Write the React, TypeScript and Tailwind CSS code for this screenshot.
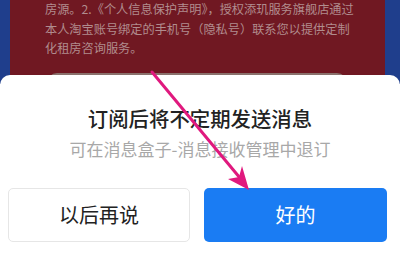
import React from 'react';

export default function App() {
  return (
    <div className="relative w-[400px] h-[263px] overflow-hidden bg-white font-['Noto_Sans_CJK_SC','Noto_Sans',sans-serif]">
      {/* Background page behind the sheet */}
      <div className="flex h-[84px]">
        <div className="w-[10px] bg-[#1f3e8c]" />
        <div className="flex-1 bg-[#701822] pl-[35px]">
          <div className="text-[12.2px] leading-[19.5px] text-[#b08c8e] whitespace-nowrap">
            <p>房源。2.《个人信息保护声明》，授权添玑服务旗舰店通过</p>
            <p>本人淘宝账号绑定的手机号（隐私号）联系您以提供定制</p>
            <p>化租房咨询服务。</p>
          </div>
          <div className="mt-[14px] ml-[2px] w-[300px] h-[20px] rounded-[10px] bg-[#8a716c]" />
        </div>
        <div className="w-[15px] bg-[#1f3e8c]" />
      </div>

      {/* Bottom sheet */}
      <div className="relative -mt-[9px] bg-white rounded-t-[10px] h-[188px] pt-[29px]">
        <h2 className="text-center text-[20.4px] leading-[28px] font-medium text-[#222222]">
          订阅后将不定期发送消息
        </h2>
        <p className="mt-[5px] text-center text-[17px] leading-[24px] text-[#a8a8a8]">
          可在消息盒子-消息接收管理中退订
        </p>
        <div className="mt-[27px] flex gap-[14px] pl-[8px] pr-[13px]">
          <button className="w-[182px] h-[54px] rounded-[5px] border border-[#e6e6e6] bg-white text-[20px] text-[#222222]">
            以后再说
          </button>
          <button className="w-[183px] h-[54px] rounded-[5px] bg-[#1a7cf3] text-[20px] text-white">
            好的
          </button>
        </div>
      </div>

      {/* Annotation arrow */}
      <svg className="absolute left-0 top-0" width="400" height="263" viewBox="0 0 400 263">
        <line x1="152" y1="72" x2="240" y2="178" stroke="#e0197e" strokeWidth="3" strokeLinecap="round" />
        <polygon points="249,190 228,179 239,177 242,166" fill="#e0197e" />
      </svg>
    </div>
  );
}
